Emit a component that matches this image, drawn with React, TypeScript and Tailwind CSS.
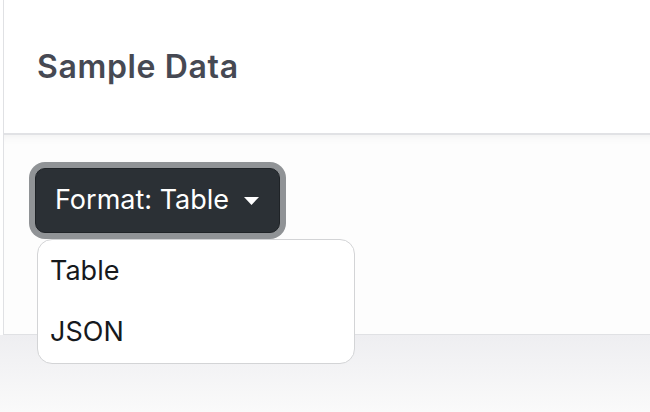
import { useState } from 'react'

const FORMATS = ['Table', 'JSON']

function FormatDropdown() {
  const [format, setFormat] = useState('Table')
  const [open, setOpen] = useState(true)

  return (
    <div className="relative">
      <button
        type="button"
        onClick={() => setOpen(!open)}
        className="flex h-[65px] w-[245px] items-center gap-[15px] rounded-[10px] border border-[#1f2327] bg-[#2b3035] pl-[19px] text-[27px] leading-[1.5] text-white ring-[6px] ring-[#909396]"
      >
        <span>Format: {format}</span>
        <svg width="15" height="8" viewBox="0 0 15 8" className="mt-[1px]">
          <path d="M0 0h15L7.5 8z" fill="#ffffff" />
        </svg>
      </button>
      {open && (
        <div className="absolute left-[2px] top-[71px] w-[318px] rounded-[15px] border-[1.5px] border-[#d3d4d6] bg-white">
          {FORMATS.map((f) => (
            <div
              key={f}
              onClick={() => {
                setFormat(f)
                setOpen(false)
              }}
              className="px-3 py-[10.5px] text-[27px] leading-[1.5] text-[#16191d]"
            >
              {f}
            </div>
          ))}
        </div>
      )}
    </div>
  )
}

export default function App() {
  return (
    <div
      className="flex h-[412px] w-[650px] flex-col overflow-hidden bg-white"
      style={{ fontFamily: 'Inter, "Noto Sans", sans-serif' }}
    >
      <div className="-mr-6 ml-[3px] border-b-[1.5px] border-l-[1.5px] border-[#e0e1e4] bg-white">
        <div className="flex h-[135px] items-center border-b-2 border-[#e1e2e5] pl-[33px]">
          <h2 className="text-[32px] font-semibold tracking-[0.02em] text-[#464953]">Sample Data</h2>
        </div>
        <div className="h-[199px] bg-[#fdfdfd] pl-[31px] pt-[33px] shadow-[inset_0_10px_10px_-8px_rgba(0,0,0,0.05)]">
          <FormatDropdown />
        </div>
      </div>
      <div className="flex-1 bg-linear-to-b from-[#eeeef1] to-[#fafafa]" />
    </div>
  )
}
